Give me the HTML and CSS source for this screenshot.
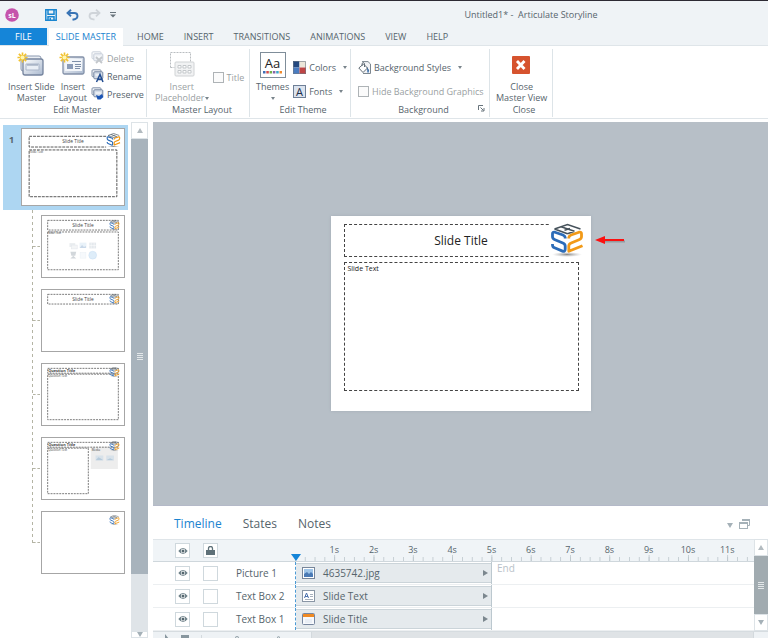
FILE: index.html
```html
<!DOCTYPE html>
<html lang="en">
<head>
<meta charset="utf-8">
<title>Untitled1* - Articulate Storyline</title>
<link rel="stylesheet" href="styles.css">
</head>
<body>
<svg class="defs" aria-hidden="true">
  <defs>
    <linearGradient id="steel" x1="0" y1="0" x2="1" y2="1"><stop offset="0" stop-color="#fff"/><stop offset="1" stop-color="#aab9cf"/></linearGradient>
    <radialGradient id="shade"><stop offset="0" stop-color="#555" stop-opacity=".7"/><stop offset="1" stop-color="#999" stop-opacity="0"/></radialGradient>
    <symbol id="logo" viewBox="0 0 34 34">
      <ellipse cx="17" cy="31.500" rx="15" ry="2.500" fill="url(#shade)"/>
      <g fill="none" stroke-width="2.800" stroke-linecap="butt" stroke-linejoin="round">
        <path stroke="#2c6cb8" d="M15.200 15.500V14.500C15.200 13.300 14.300 12.600 13 12L5 9.200C3.200 8.700 2.500 9.400 2.500 10.800V13.800C2.500 15.200 3.200 16 5 16.700L12.800 20C14.500 20.700 15.200 21.600 15.200 23V26C15.200 28 14 28.700 12.500 28.100L4.500 24.800C3 24.200 2.500 23.500 2.500 22V21"/>
        <path stroke="#f29a17" d="M18.800 15.500V14.500C18.800 13.300 19.700 12.600 21 12L29 9.200C30.800 8.700 31.500 9.400 31.500 10.800V13.800C31.500 15.200 30.800 16 29 16.700L21.200 20C19.500 20.700 18.800 21.600 18.800 23V28.300L32.500 22.700"/>
      </g>
      <path fill="none" stroke="#46525b" stroke-width="1.500" d="M4.500 6L17.500 1.500L30.500 6M4.500 6L17.500 10.800M11 3.700L24.500 8.300M17.500 10.800L24.500 8.300M14.500 7.200L20 5.500"/>
    </symbol>
    <symbol id="burst" viewBox="0 0 12 12">
      <path stroke="#f2c230" stroke-width="1.800" d="M6 .5v11M.5 6h11M2 2l8 8M10 2l-8 8"/><circle cx="6" cy="6" r="2.200" fill="#fff6b0"/>
    </symbol>
    <symbol id="pages" viewBox="0 0 13 14">
      <rect x="1" y=".8" width="9" height="7" rx="1" fill="#eef1f5" stroke="#8191a8"/>
      <rect x="2.800" y="2.800" width="9" height="7" rx="1" fill="#d5dde8" stroke="#7485a0"/>
      <path d="M4.500 6h5.500" stroke="#fff"/>
    </symbol>
    <symbol id="eye" viewBox="0 0 10 8">
      <path d="M.3 4Q5-2 9.700 4Q5 10 .3 4z" fill="#6b7e86"/><circle cx="5" cy="4" r="2.200" fill="#fff"/><circle cx="5" cy="4" r="1.500" fill="#54666e"/>
    </symbol>
    <symbol id="media" viewBox="0 0 30 20">
      <g opacity=".6"><rect x="1" y="2" width="6" height="4" fill="#dde1e6"/><rect x="3" y="4" width="6" height="4" fill="#eceef1" stroke="#ccd3dc" stroke-width=".5"/>
      <rect x="11.500" y="1.500" width="7" height="5.500" fill="#dbe9f5"/><path d="M11.500 7l2.500-3 2 2 2-1v2z" fill="#a5bfda"/>
      <rect x="21.500" y="1.500" width="7" height="6" fill="#d3dae2"/><path d="M23.500 1.500v6M26.500 1.500v6M21.500 4.500h7" stroke="#fff" stroke-width=".5"/>
      <path d="M2 11h6l-1 4h-4zM2 18l3-3 3 3z" fill="#b4bcc3"/><rect x="12" y="11.500" width="6" height="6" fill="#f1f6fa" stroke="#dce6ef" stroke-width=".5"/><circle cx="25" cy="14.500" r="4" fill="#c9e1f6" stroke="#a9cdec" stroke-width=".6"/></g>
    </symbol>
  </defs>
</svg>

<header class="titlebar">
  <svg class="brand" viewBox="0 0 14 14" aria-hidden="true"><circle cx="7" cy="7" r="6.800" fill="#c553ab"/><text x="7" y="9.600" text-anchor="middle">sL</text></svg>
  <button class="quick" aria-label="Save"><svg width="12" height="12" viewBox="0 0 12 12"><path d="M.8.8h10.400v10.400H.8zM3 .8v4.400h6V.8M3 11V7.800h6V11" fill="none" stroke="#1a86d0" stroke-width="1.500"/><path d="M4.500 9h1.500v2H4.500z" fill="#1a86d0"/></svg></button>
  <button class="quick" aria-label="Undo"><svg width="13" height="12" viewBox="0 0 13 12"><path d="M1.500 4H8.500C12 4 12.500 8.500 9.500 10L6.500 10.700M5 .7L1.500 4L5 7.300" fill="none" stroke="#3974b5" stroke-width="1.900"/></svg></button>
  <button class="quick" aria-label="Redo"><svg width="13" height="12" viewBox="0 0 13 12"><path d="M11.500 4H4.500C1 4 .5 8.500 3.500 10L6.500 10.700M8 .7L11.500 4L8 7.300" fill="none" stroke="#cfd4d9" stroke-width="1.800"/></svg></button>
  <button class="quick" aria-label="Customize toolbar"><svg width="6" height="6" viewBox="0 0 6 6"><path d="M0 .5h6" stroke="#68747c"/><path d="M0 2.500h6L3 5.500z" fill="#68747c"/></svg></button>
  <h1 class="doc-title">Untitled1* -&nbsp; Articulate Storyline</h1>
</header>

<nav class="tabs">
  <a class="tab tab-file" href="#">FILE</a>
  <a class="tab tab-active" href="#">SLIDE MASTER</a>
  <a class="tab" href="#">HOME</a>
  <a class="tab" href="#">INSERT</a>
  <a class="tab" href="#">TRANSITIONS</a>
  <a class="tab" href="#">ANIMATIONS</a>
  <a class="tab" href="#">VIEW</a>
  <a class="tab" href="#">HELP</a>
</nav>

<section class="ribbon">
  <div class="group group-edit">
    <div class="tools">
      <button class="big"><svg width="28" height="26" viewBox="0 0 28 26"><rect x="4" y="4" width="20" height="15" rx="2" fill="#e9edf3" stroke="#8b99b0"/><rect x="6" y="7" width="20" height="16" rx="2" fill="url(#steel)" stroke="#75849e" stroke-width="1.300"/><path d="M9 12h13v6H9z" fill="#e9eef5" stroke="#aab6c9"/><path d="M10 13h11" stroke="#8997ae"/><use href="#burst" width="11" height="11"/></svg>Insert Slide<br>Master</button>
      <button class="big"><svg width="28" height="26" viewBox="0 0 28 26"><rect x="4" y="5" width="21" height="17" rx="1.500" fill="url(#steel)" stroke="#8290a8" stroke-width="1.300"/><path d="M6 7h17v12H6z" fill="#f3f6fa"/><path d="M13 9.500h9M16 12.500h6M16 14.500h6M16 16.500h5" stroke="#7e8fa9"/><path d="M8 12h6v5H8z" fill="#8a9bb7"/><use href="#burst" width="11" height="11"/></svg>Insert<br>Layout</button>
      <div class="stack">
        <button class="small" disabled><svg width="13" height="14" viewBox="0 0 13 14"><g opacity=".4"><use href="#pages" width="13" height="14"/></g><path d="M5 6l6 6M11 6l-6 6" stroke="#c3c7cb" stroke-width="1.800"/></svg>Delete</button>
        <button class="small"><svg width="13" height="14" viewBox="0 0 13 14"><use href="#pages" width="13" height="14"/><path d="M5.500 13L9 5.500 12 13M7 10.500h4" fill="none" stroke="#224d91" stroke-width="1.500"/></svg>Rename</button>
        <button class="small"><svg width="13" height="14" viewBox="0 0 13 14"><use href="#pages" width="13" height="14"/><path d="M5 8l3 1 3-2 1.500 3-3 2.500H6.500z" fill="#1c55b4"/></svg>Preserve</button>
      </div>
    </div>
    <h2 class="group-name">Edit Master</h2>
  </div>

  <div class="group group-layout">
    <div class="tools">
      <button class="big" disabled><svg width="28" height="26" viewBox="0 0 28 26"><path d="M2.500 15.500V.5h20v9" fill="none" stroke="#b9bdc0" stroke-dasharray="2 1"/><path d="M2.500 15.500h4" stroke="#b9bdc0" stroke-dasharray="2 1"/><rect x="7" y="10" width="19" height="14" rx="1" fill="#f1f2f3" stroke="#d0d3d5"/><path d="M10 13.500h3v2.500h-3zM15 13.500h3v2.500h-3zM20 13.500h3v2.500h-3zM10 18.500h3v2.500h-3zM15 18.500h3v2.500h-3zM20 18.500h3v2.500h-3z" fill="#fff" stroke="#c4c8cb"/></svg>Insert<br>Placeholder<i class="caret"></i></button>
      <label class="check"><input type="checkbox" disabled>Title</label>
    </div>
    <h2 class="group-name">Master Layout</h2>
  </div>

  <div class="group group-theme">
    <div class="tools">
      <button class="big"><svg width="28" height="26" viewBox="0 0 28 26"><rect x="1.500" y=".5" width="25" height="25" fill="#fff" stroke="#7f8d99"/><text class="theme-text" x="13.500" y="16" text-anchor="middle">Aa</text><g><path fill="#3f6fb5" d="M4 19h2.500v2.500H4z"/><path fill="#d34c4c" d="M7.300 19h2.500v2.500H7.300z"/><path fill="#72b04a" d="M10.600 19h2.500v2.500h-2.500z"/><path fill="#8864a8" d="M13.900 19h2.500v2.500h-2.500z"/><path fill="#3aa6c8" d="M17.200 19h2.500v2.500h-2.500z"/><path fill="#f08a2c" d="M20.500 19h2.500v2.500h-2.500z"/></g></svg>Themes<br><i class="caret"></i></button>
      <div class="stack stack-wide">
        <button class="small"><svg width="13" height="13" viewBox="0 0 13 13"><path fill="#24487f" d="M0 0h6.500v6.500H0z"/><path fill="#ece7da" d="M6.500 0H13v6.500H6.500z"/><path fill="#4a7cc0" d="M0 6.500h6.500V13H0z"/><path fill="#bf4545" d="M6.500 6.500H13V13H6.500z"/><path d="M.5.500h12v12H.5z" fill="none" stroke="#6f7884" stroke-width=".6"/></svg>Colors<i class="caret"></i></button>
        <button class="small"><svg width="13" height="13" viewBox="0 0 13 13"><rect x=".5" y=".5" width="12" height="12" fill="#dbe3ee" stroke="#6e7f96"/><text class="font-text" x="6.500" y="10.500" text-anchor="middle">A</text></svg>Fonts<i class="caret"></i></button>
      </div>
    </div>
    <h2 class="group-name">Edit Theme</h2>
  </div>

  <div class="group group-background">
    <div class="tools">
      <div class="stack stack-wide">
        <button class="small"><svg width="13" height="13" viewBox="0 0 13 13"><path d="M4 .6h6L12.500 3v9.500H5" fill="#f2f3f5" stroke="#7c8790"/><path d="M.8 7L5.500 3L9.500 7L5 11.500z" fill="#fff" stroke="#626d76"/><path d="M4 5V2.500Q5.500.5 6.500 2.500V6M9 6.500l1.500 3.500" fill="none" stroke="#626d76"/><path d="M9.300 6.500l1.500 2.500v2.500H9.300z" fill="#356cad"/></svg>Background Styles<i class="caret"></i></button>
        <label class="check"><input type="checkbox" disabled>Hide Background Graphics</label>
      </div>
    </div>
    <h2 class="group-name">Background</h2>
    <button class="launcher" aria-label="Background options"><svg width="7" height="7" viewBox="0 0 7 7"><path d="M.5 5V.5H5M2.500 2.500l3 3M6 3v3H3" fill="none" stroke="#68747c"/></svg></button>
  </div>

  <div class="group group-close">
    <div class="tools">
      <button class="big"><svg width="28" height="26" viewBox="0 0 28 26"><rect x="4" y="4" width="18" height="18" rx="1" fill="#d6532e"/><path d="M9 9l7.500 8M16.500 9L9 17" stroke="#fff" stroke-width="2.800"/></svg>Close<br>Master View</button>
    </div>
    <h2 class="group-name">Close</h2>
  </div>
</section>

<div class="workspace">
  <aside class="slides">
    <div class="master">
      <span class="number">1</span>
      <svg class="thumb thumb-master" viewBox="0 0 104 78"><g class="dash"><path d="M86 7.500H7V18.500H86M7 21.500h90v48H7z"/></g><text class="tiny" x="52" y="14.500" text-anchor="middle">Slide Title</text><text class="micro" x="8" y="25">Slide Text</text><use href="#logo" x="86" y="4" width="15" height="15"/></svg>
    </div>
    <ol class="layouts">
      <li><svg class="thumb" viewBox="0 0 84 63"><g class="line"><path d="M5.500 4.500h73v10h-73zM5.500 16.500h73v39h-73z"/></g><text class="tiny" x="42" y="11" text-anchor="middle">Slide Title</text><text class="micro" x="6" y="19">Slide Text</text><use href="#logo" x="69" y="4" width="11" height="11"/><use href="#media" x="27" y="26" width="30" height="20"/></svg></li>
      <li><svg class="thumb" viewBox="0 0 84 63"><g class="line"><path d="M5.500 4.500h73v10h-73z"/></g><text class="tiny" x="42" y="11" text-anchor="middle">Slide Title</text><use href="#logo" x="69" y="4" width="11" height="11"/></svg></li>
      <li><svg class="thumb" viewBox="0 0 84 63"><g class="line"><path d="M5.500 4.500h73v5h-73zM5.500 10.500h73v47h-73z"/></g><text class="tiny tiny-dark" x="6" y="8.500">Question Title</text><text class="micro" x="6" y="13.500">Question Text</text><use href="#logo" x="69" y="3" width="11" height="11"/></svg></li>
      <li><svg class="thumb" viewBox="0 0 84 63"><path fill="#ededed" d="M50 9h28v23H50z"/><g class="line"><path d="M5.500 4.500h73v5h-73zM5.500 10.500h42v47h-42z"/></g><text class="tiny tiny-dark" x="6" y="8.500">Question Title</text><text class="micro" x="6" y="13.500">Question Text</text><text class="micro" x="51" y="13.500">Media</text><path fill="#d8e2ea" d="M55 18h8v5h-8zM66 18h8v5h-8z"/><path fill="#b6cbdc" d="M55 23l3-3 2 1 3 2zM66 23l4-2 4 2z"/><use href="#logo" x="69" y="3" width="11" height="11"/></svg></li>
      <li><svg class="thumb" viewBox="0 0 84 63"><use href="#logo" x="69" y="3" width="11" height="11"/></svg></li>
    </ol>
  </aside>
  <div class="scroll scroll-left">
    <button class="arrow" aria-label="Scroll up"><i class="up"></i></button>
    <div class="grip"><i class="bars"></i></div>
    <div class="rest"></div>
    <button class="arrow arrow-cut" aria-label="Scroll down"><i class="down"></i></button>
  </div>

  <main class="main">
    <div class="stage">
      <div class="slide">
        <div class="slide-title">Slide Title</div>
        <div class="slide-text">Slide Text</div>
        <svg class="slide-logo" viewBox="0 0 34 34" aria-hidden="true"><use href="#logo"/></svg>
        <svg class="pointer" viewBox="0 0 32 12" aria-hidden="true"><path d="M9 6.500h21" stroke="#777" stroke-width="2" opacity=".5"/><path d="M9 5h20" stroke="#fb1111" stroke-width="2"/><path d="M0 5L10 1v8z" fill="#fb1111"/></svg>
      </div>
    </div>

    <section class="panel">
      <div class="panel-tabs">
        <a class="panel-active" href="#">Timeline</a><a href="#">States</a><a href="#">Notes</a>
        <button class="panel-menu" aria-label="Panel menu"><i class="down"></i></button>
        <button class="panel-dock" aria-label="Undock panel"><svg width="11" height="11" viewBox="0 0 11 11"><path d="M3.500 3V1.500h7v6H9" fill="none" stroke="#a5b1b8"/><path d="M3 1h8v2H3z" fill="#a5b1b8"/><rect x=".5" y="4.500" width="8" height="6" fill="#fff" stroke="#a5b1b8"/><path d="M0 4h9v2H0z" fill="#a5b1b8"/></svg></button>
      </div>
      <div class="timeline">
        <div class="tracks">
          <div class="row ruler-row">
            <div class="toggles"><span class="box"><svg width="10" height="8"><use href="#eye"/></svg></span><span class="box"><svg width="9" height="9" viewBox="0 0 9 9"><path d="M2.500 4.500V2.500q0-2 2-2t2 2v2" fill="none" stroke="#5e7078" stroke-width="1.300"/><path d="M0 4h9v5H0z" fill="#5e7078"/></svg></span></div>
            <div class="ruler">
              <div class="seconds"><span>1s</span><span>2s</span><span>3s</span><span>4s</span><span>5s</span><span>6s</span><span>7s</span><span>8s</span><span>9s</span><span>10s</span><span>11s</span></div>
              <svg class="ticks" viewBox="0 0 1168 6" preserveAspectRatio="none" aria-hidden="true">
                <path d="M0 4H1168" stroke-dasharray="2 23" stroke-width="4"/>
                <path d="M0 3H1168" stroke-dasharray="2 98" stroke-width="6"/>
              </svg>
              <i class="playhead"></i>
            </div>
          </div>
          <div class="row">
            <div class="toggles"><button class="box" aria-label="Show Picture 1"><svg width="10" height="8"><use href="#eye"/></svg></button><input type="checkbox" aria-label="Lock Picture 1"><span class="name">Picture 1</span></div>
            <div class="track"><div class="clip"><svg width="13" height="12" viewBox="0 0 13 12"><rect x=".5" y=".5" width="12" height="11" fill="#fff" stroke="#77869a"/><path d="M2 2h9v8H2z" fill="#9fc5e8"/><path d="M2 10V7l3-2 2 2 2-2 2 2v3z" fill="#4a7ab5"/></svg>4635742.jpg</div><div class="after">End</div></div>
          </div>
          <div class="row">
            <div class="toggles"><button class="box" aria-label="Show Text Box 2"><svg width="10" height="8"><use href="#eye"/></svg></button><input type="checkbox" aria-label="Lock Text Box 2"><span class="name">Text Box 2</span></div>
            <div class="track"><div class="clip"><svg width="13" height="12" viewBox="0 0 13 12"><rect x=".5" y=".5" width="12" height="11" fill="#fff" stroke="#8996a5"/><path d="M2.500 8L4.500 3l2 5M3 6.500h3" fill="none" stroke="#4a70ac"/><path d="M8 4.500h3M8 6.500h3M3 9.500h8" stroke="#a7b1bd"/></svg>Slide Text</div><div class="after"></div></div>
          </div>
          <div class="row">
            <div class="toggles"><button class="box" aria-label="Show Text Box 1"><svg width="10" height="8"><use href="#eye"/></svg></button><input type="checkbox" aria-label="Lock Text Box 1"><span class="name">Text Box 1</span></div>
            <div class="track"><div class="clip"><svg width="13" height="12" viewBox="0 0 13 12"><rect x=".5" y=".5" width="12" height="11" rx="1" fill="#f7f9fc" stroke="#77869f"/><path d="M1 1h11v3H1z" fill="#ef8a24"/><path d="M3 7h7M3 9h7" stroke="#dbe3ee"/></svg>Slide Title</div><div class="after"></div></div>
          </div>
        </div>
        <div class="scroll scroll-right">
          <button class="arrow" aria-label="Scroll up"><i class="up"></i></button>
          <div class="grip"><i class="bars"></i></div>
          <button class="arrow" aria-label="Scroll down"><i class="down"></i></button>
        </div>
      </div>
      <div class="footer">
        <div class="footer-tools"><svg width="50" height="7" viewBox="0 0 50 7" aria-hidden="true"><path d="M1 2l4 5H1zM17 3h8v4h-8z" fill="#87969e"/><path d="M37.500 3v4" stroke="#d4dade"/></svg><svg width="50" height="7" viewBox="0 0 50 7" aria-hidden="true"><path d="M1 5.500q2-2 4 0M43 5.500q1.500-1.500 3 0" fill="none" stroke="#87969e"/></svg></div>
        <div class="footer-scroll"></div>
      </div>
    </section>
  </main>
</div>
</body>
</html>
```
FILE: styles.css
```css
* { box-sizing: border-box; }

body {
  margin: 0;
  height: 100vh;
  display: flex;
  flex-direction: column;
  overflow: hidden;
  background: #fff;
  color: #56646c;
  font: 9px/11px "Open Sans", "Noto Sans", sans-serif;
}

button {
  margin: 0;
  padding: 0;
  border: 0;
  background: none;
  color: inherit;
  font: inherit;
}

a { color: inherit; text-decoration: none; }
svg { display: block; flex: none; }
.defs { position: absolute; width: 0; height: 0; }

input[type="checkbox"] {
  appearance: none;
  flex: none;
  width: 11px;
  height: 11px;
  margin: 0;
  border: 1px solid #aeb3b6;
  background: #fbfbfb;
}

.caret, .up, .down {
  display: inline-block;
  border: 3px solid transparent;
}
.caret { border-width: 3px 2px 0; border-top-color: #79848b; vertical-align: middle; }
.up { border-width: 0 3px 5px; border-bottom-color: #b3bbc0; }
.down { border-width: 5px 3px 0; border-top-color: #a5b1b8; }

/* Title bar */
.titlebar {
  flex: none;
  display: flex;
  align-items: center;
  height: 28px;
  padding-left: 5px;
  border-top: 1px solid #2d2a33;
  background: #eff3f6;
}
.brand { width: 14px; height: 14px; margin-right: 17px; }
.brand text { fill: #fff; font-size: 7px; font-weight: 700; }
.quick { margin-left: 9px; }
.doc-title {
  flex: 1;
  margin: 0;
  padding-left: 178px;
  text-align: center;
  font-size: 9px;
  font-weight: 400;
}

/* Ribbon tabs */
.tabs {
  flex: none;
  display: flex;
  height: 18px;
  background: #eff3f6;
  border-bottom: 1px solid #dfe5e9;
}
.tab { padding: 0 9px; margin-left: 2px; line-height: 18px; }
.tab-file { margin: 0; padding: 0 15px; background: #1585d8; color: #fff; }
.tab-active { height: 18px; padding: 0 7px; margin-right: 3px; background: #fff; color: #1b84d0; }

/* Ribbon */
.ribbon {
  flex: none;
  display: flex;
  height: 73px;
  padding-top: 3px;
  border-bottom: 1px solid #dfe5e9;
}
.group {
  position: relative;
  height: 68px;
  padding-top: 2px;
  border-right: 1px solid #dde4e8;
}
.group-edit { width: 147px; padding-left: 8px; }
.group-layout { width: 103px; padding-left: 8px; }
.group-theme { width: 101px; padding-left: 6px; }
.group-background { width: 139px; padding-left: 7px; }
.group-close { width: 63px; padding-left: 6px; }
.tools { display: flex; gap: 4px; height: 53px; }
.group-name {
  margin: 0;
  text-align: center;
  font-size: 9px;
  font-weight: 400;
}
.big {
  display: block;
  white-space: nowrap;
  text-align: center;
}
.big svg { margin: 0 auto 3px; }
.small, .check { display: flex; align-items: center; gap: 3px; white-space: nowrap; }
.small .caret { margin-left: 4px; }
:disabled, .check { color: #9a9fa3; }
.stack { display: flex; flex-direction: column; justify-content: space-between; height: 50px; }
.stack-wide { height: 52px; padding-top: 4px; justify-content: space-around; }
.launcher { position: absolute; right: 4px; bottom: 5px; }
.theme-text { font-size: 13px; fill: #222; }
.font-text { font-size: 11px; fill: #1c2e48; }

/* Workspace */
.workspace { flex: 1; display: flex; min-height: 0; }
.slides { flex: none; width: 131px; padding: 6px 3px 0; }
.master {
  display: flex;
  justify-content: space-between;
  height: 85px;
  padding: 3px 3px 3px 6px;
  background: #add6f2;
}
.number { padding-top: 6px; font-weight: 700; }
.thumb {
  width: 84px;
  height: 63px;
  border: 1px solid #a6a6a6;
  background: #fff;
}
.thumb-master { width: 104px; height: 78px; }
.thumb text { fill: #444; }
.tiny { font-size: 5px; }
.tiny-dark { font-size: 4px; font-weight: 700; }
.micro { font-size: 3px; }
.dash path, .line path { fill: none; stroke: #555; stroke-dasharray: 3 1; }
.line path { stroke: #777; stroke-dasharray: 2 1; }
.layouts {
  display: flex;
  flex-direction: column;
  gap: 11px;
  margin: 0 0 0 29px;
  padding: 5px 0 0 9px;
  list-style: none;
  background: repeating-linear-gradient(#b4b4a4 0 3px, transparent 3px 6px) left top / 1px calc(100% - 31px) no-repeat;
}
.layouts li { position: relative; }
.layouts li::before {
  content: "";
  position: absolute;
  top: 31px;
  left: -8px;
  width: 7px;
  border-top: 1px dashed #b4b4a4;
}

/* Scroll bars */
.scroll { flex: none; display: flex; flex-direction: column; }
.scroll .arrow { display: grid; place-items: center; height: 17px; border: 1px solid #dde3e7; background: #fff; }
.scroll .grip { display: grid; place-items: center; background: #a8b3bc; }
.bars { width: 6px; height: 7px; background: repeating-linear-gradient(#e3e7e9 0 1px, transparent 1px 2px); }
.scroll-left { width: 17px; padding-top: 3px; margin-right: 5px; }
.scroll-left .grip { flex: 436; }
.scroll-left .rest { flex: 57; background: #dfe4e8; }
.scroll .arrow-cut { height: 7px; align-items: end; overflow: hidden; }
.scroll-right { width: 14px; }
.scroll-right .grip { flex: 1; background: #a1abb0; }

/* Stage */
.main { flex: 1; display: flex; flex-direction: column; min-width: 0; padding-top: 3px; }
.stage {
  flex: 1;
  display: grid;
  place-items: center;
  background: #b7bfc7;
}
.slide {
  position: relative;
  display: flex;
  flex-direction: column;
  gap: 5px;
  width: 260px;
  height: 195px;
  padding: 8px 12px 20px 13px;
  background: #fff;
  box-shadow: 0 0 3px #a4adb6;
}
.slide-title, .slide-text { border: 1px dashed #444; color: #222; }
.slide-title { height: 33px; line-height: 31px; text-align: center; font-size: 12px; }
.slide-text { flex: 1; padding: 0 3px; font-size: 7px; }
.slide-logo { position: absolute; top: 7px; right: 7px; width: 34px; height: 34px; background: #fff; }
.pointer { position: absolute; top: 19px; left: 264px; width: 32px; height: 12px; }

/* Timeline panel */
.panel { flex: none; border-top: 1px solid #b4b9c8; background: #fff; }
.panel-tabs {
  display: flex;
  align-items: center;
  gap: 21px;
  height: 33px;
  padding: 2px 18px 0 21px;
  font-size: 12px;
  line-height: 16px;
}
.panel-active { color: #1b84d0; }
.panel-menu { margin-left: auto; }
.panel-dock { margin-left: -15px; }
.timeline { display: flex; }
.tracks { flex: 1; min-width: 0; }
.row { display: flex; height: 23px; border-bottom: 1px solid #eceff1; }
.ruler-row { background: #f0f4f7; border-top: 1px solid #dfe5e9; border-bottom-color: #cfd7dc; }
.toggles {
  flex: none;
  display: flex;
  align-items: center;
  gap: 13px;
  width: 142px;
  padding-left: 22px;
}
.box, .toggles input {
  display: grid;
  place-items: center;
  width: 15px;
  height: 15px;
  border: 1px solid #cfd8dd;
  background: #fff;
}
.name { margin-left: 5px; font-size: 10px; line-height: 12px; }
.ruler { position: relative; flex: 1; display: flex; flex-direction: column; justify-content: space-between; }
.seconds { display: flex; padding-top: 4px; font-size: 9px; }
.seconds::before { content: ""; flex: 50; }
.seconds::after { content: ""; flex: 18; }
.seconds span { flex: 100 0 0; min-width: 0; text-align: center; }
.ticks { width: 100%; height: 6px; }
.ticks path { stroke: #bcc6cc; }
.playhead {
  position: absolute;
  left: -4px;
  bottom: 0;
  border: 5px solid transparent;
  border-width: 7px 5px 0;
  border-top-color: #1585d8;
}
.track {
  flex: 1;
  display: grid;
  grid-template-columns: 195fr 263fr;
  border-left: 1px dashed #4c9bd5;
}
.clip {
  display: flex;
  align-items: center;
  gap: 8px;
  margin: 1px 0;
  padding: 0 3px 0 6px;
  border: 1px solid #cbd4d9;
  border-width: 1px 0;
  background: #e5eaed;
  font-size: 10px;
}
.clip::after {
  content: "";
  margin-left: auto;
  border: 3px solid transparent;
  border-width: 3px 0 3px 5px;
  border-left-color: #7b878e;
}
.after { padding-left: 5px; border-left: 1px solid #bcc8cf; color: #b9c2c9; font-size: 10px; line-height: 12px; }
.footer { display: flex; height: 7px; overflow: hidden; border-top: 1px solid #d6dce0; background: #eef2f5; }
.footer-tools { display: flex; gap: 20px; width: 142px; padding-left: 11px; overflow: hidden; }
.footer-scroll { flex: 1; margin: 0 14px 0 16px; border: 1px solid #d3d9dd; border-width: 0 1px; background: #dfe3e6; }
```
